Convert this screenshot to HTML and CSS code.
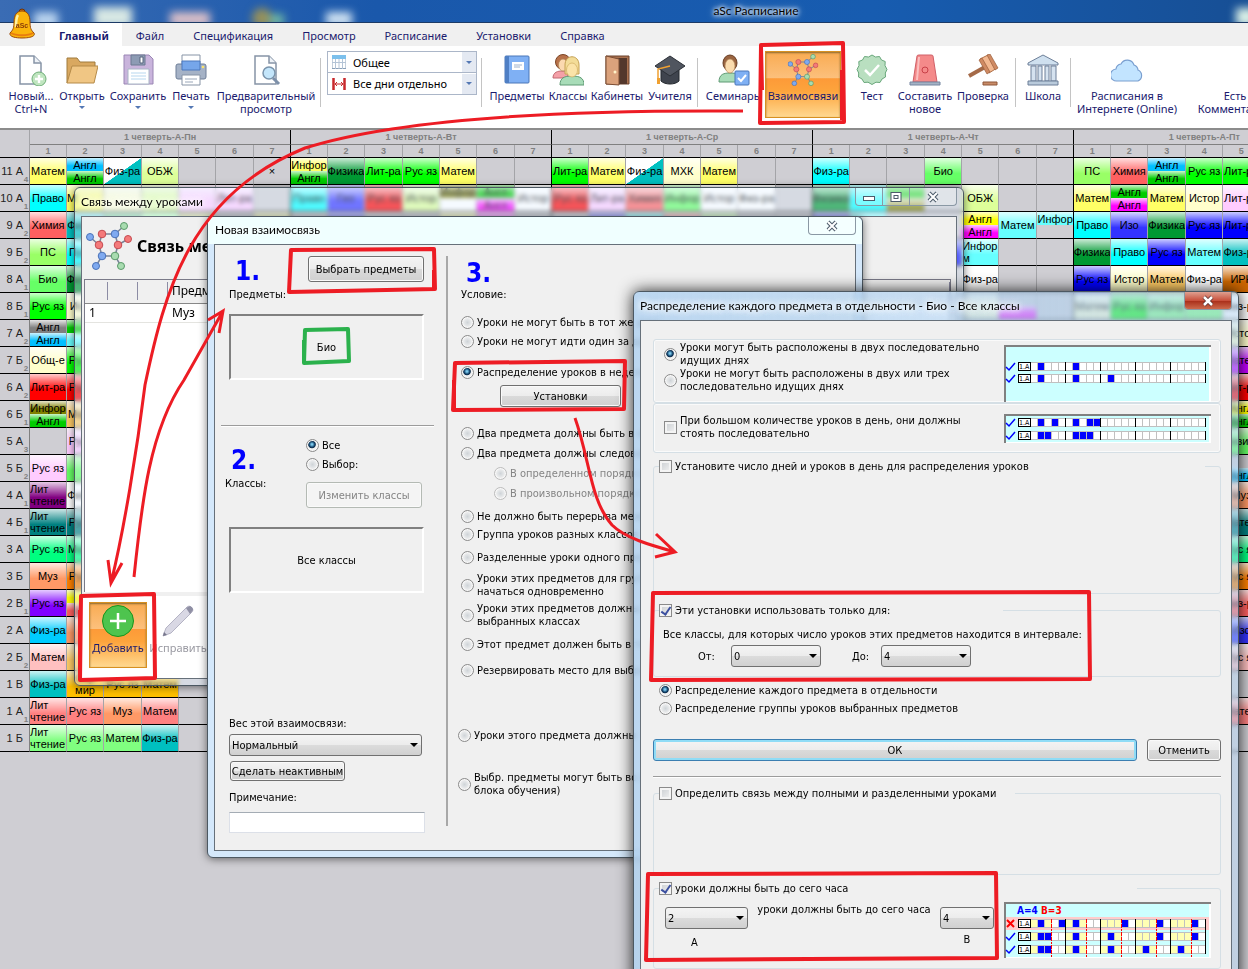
FILE: index.html
```
<!DOCTYPE html>
<html lang="ru">
<head>
<meta charset="utf-8">
<title>aSc Расписание</title>
<link rel="stylesheet" href="styles.css">
</head>
<body>
<svg class="defs" aria-hidden="true">
  <symbol id="net" viewBox="0 0 46 48">
    <g fill="none" stroke="#7a8498" stroke-width="1.5">
      <path d="M4 15 13 23 16 12 29 12 38 4M29 12 32 23 42 17M32 23 29 34 35 44M29 34 16 34 13 23M16 34 10 44"/>
    </g>
    <g stroke-width="1">
      <g fill="#7faaf0" stroke="#4a72b8"><circle cx="4" cy="15" r="3.5"/><circle cx="29" cy="12" r="3.8"/><circle cx="16" cy="34" r="3.8"/><circle cx="10" cy="44" r="3.5"/></g>
      <g fill="#f47a7a" stroke="#c44a50"><circle cx="16" cy="12" r="3.8"/><circle cx="13" cy="23" r="3.8"/><circle cx="32" cy="23" r="3.8"/><circle cx="42" cy="17" r="3.5"/></g>
      <g fill="#a8dcb0" stroke="#5a9a6a"><circle cx="38" cy="4" r="3.5"/><circle cx="29" cy="34" r="3.8"/><circle cx="35" cy="44" r="3.5"/></g>
    </g>
  </symbol>
  <symbol id="page" viewBox="0 0 32 32">
    <path d="M5 2h14l7 7v21H5z" fill="#fff" stroke="#8794a6" stroke-width="1.5"/>
    <path d="M19 2v7h7" fill="#eef2f7" stroke="#8794a6" stroke-width="1.5"/>
  </symbol>
</svg>

<header class="titlebar">
  <svg class="titlebar-glow" width="1248" height="22" aria-hidden="true">
    <g class="blobs">
      <rect x="34" y="12" width="24" height="16" fill="#b9d3ee"/>
      <rect x="94" y="7" width="38" height="20" fill="#d8e8e4"/>
      <rect x="170" y="12" width="40" height="14" fill="#dcc0c8"/>
      <circle cx="262" cy="18" r="10" fill="#97915a"/><rect x="270" y="14" width="14" height="12" fill="#6fb7a4"/>
      <rect x="326" y="12" width="26" height="14" fill="#cfe2f2"/>
      <rect x="1236" y="8" width="20" height="18" fill="#d8efe6"/>
    </g>
  </svg>
  <svg class="bell" width="28" height="32" viewBox="0 0 28 32" aria-hidden="true">
    <circle cx="13" cy="4" r="3" fill="#c96a10" stroke="#6e3206"/>
    <path d="M13 3C7 3 5 8 5 14c0 6-1 8-4 11-1 4 6 5 12 5s14-1 12-5c-3-3-4-5-4-11 0-6-2-11-8-11z" fill="#fbb40c" stroke="#9a4a08"/>
    <path d="M9 7c-2 3-2 8-2 12" fill="none" stroke="#fff0a0" stroke-width="2.5"/>
    <path d="M2 25c5 3 17 3 22 0" fill="none" stroke="#e87c10" stroke-width="2"/>
    <text x="13" y="20" text-anchor="middle" class="bell-text">aSc</text>
  </svg>
  <span class="app-title">aSc Расписание</span>
</header>

<nav class="tabs">
  <a class="tab active" href="#main">Главный</a>
  <a class="tab" href="#file">Файл</a>
  <a class="tab" href="#spec">Спецификация</a>
  <a class="tab" href="#view">Просмотр</a>
  <a class="tab" href="#schedule">Расписание</a>
  <a class="tab" href="#settings">Установки</a>
  <a class="tab" href="#help">Справка</a>
</nav>

<div class="ribbon">
  <button class="tool w50"><svg viewBox="0 0 32 32"><use href="#page"/><circle cx="24" cy="25" r="7" fill="#bfe5bf" stroke="#6fae78"/><path d="M24 21v8M20 25h8" stroke="#fff" stroke-width="2.4"/></svg>Новый...<br>Ctrl+N</button>
  <button class="tool w52"><svg viewBox="0 0 32 32"><path d="M1 29V4h10l3 4h15v6" fill="#d9a860" stroke="#a07a3c"/><path d="M1 29 6 12h26l-4 17z" fill="#f0c684" stroke="#b58a48"/></svg>Открыть<i class="caret"></i></button>
  <button class="tool w60"><svg viewBox="0 0 32 32"><path d="M2 1h25l4 4v25H2z" fill="#c9b4dc" stroke="#9a86b4"/><path d="M9 1h14v10H9z" fill="#8d9bb4" stroke="#6c7a92"/><path d="M18 3h3v6h-3z" fill="#fff" stroke="#56657d"/><path d="M6 15h21v15H6z" fill="#fff" stroke="#a9b6c6"/><path d="M9 19h15M9 22h15M9 25h15" stroke="#b7d7ef"/></svg>Сохранить<i class="caret"></i></button>
  <button class="tool w46"><svg viewBox="0 0 32 32"><path d="M7 1h18v9H7z" fill="#fff" stroke="#8794a6"/><rect x="1" y="10" width="30" height="15" rx="2" fill="#a5b2c6" stroke="#6e7f98"/><path d="M7 7h18v9H7z" fill="#76a6ea" stroke="#4d79bd"/><path d="M7 21h18v10H7z" fill="#fff" stroke="#8794a6"/><path d="M10 25h12M10 28h8" stroke="#9aa7b9"/><circle cx="28" cy="13" r="1.3" fill="#fbe36a"/></svg>Печать<i class="caret"></i></button>
  <button class="tool w104"><svg viewBox="0 0 32 32"><use href="#page"/><path d="m23 24 6 6" stroke="#7d90aa" stroke-width="3"/><circle cx="19" cy="19" r="6" fill="#c4e6fb" stroke="#7a94ac" stroke-width="1.5"/></svg>Предварительный<br>просмотр</button>
  <span class="sep"></span>
  <div class="views">
    <label class="view"><svg width="14" height="14" viewBox="0 0 14 14"><path d="M0 .5h14v13H0z" fill="#fff" stroke="#8aa0b8"/><path d="M0 0h14v4H0z" fill="#7cc0ec"/><path d="M3.5 4v10M7 4v10M10.5 4v10M0 7.500h14" stroke="#b4c4d6"/></svg><select aria-label="Вид"><option>Общее</option></select></label>
    <label class="view"><svg width="14" height="14" viewBox="0 0 14 14"><path d="M1.500 1v12M12.500 1v12" stroke="#c8282c" stroke-width="2.500"/><path d="M3 7h8M5 5 3 7l2 2M9 5l2 2-2 2" fill="none" stroke="#c8282c"/></svg><select aria-label="Дни"><option>Все дни отдельно</option></select></label>
  </div>
  <span class="sep near"></span>
  <button class="tool w60"><svg viewBox="0 0 32 32"><rect x="4" y="2" width="24" height="27" rx="1" fill="#7fb0f4" stroke="#4b76b8"/><path d="M4 2h4v27H4z" fill="#4f7fc4"/><path d="M11 8h12v8H11z" fill="#fff"/><path d="M13 11h8M13 13h6" stroke="#9fb2cc"/></svg>Предметы</button>
  <button class="tool w42"><svg viewBox="0 0 32 32"><path d="M1 24c0-6 5-7 9-7s6 2 6 7z" fill="#f4a0a8" stroke="#c26a72"/><circle cx="11" cy="8" r="7.500" fill="#b8724a" stroke="#7c4526"/><ellipse cx="11" cy="11" rx="4.500" ry="6" fill="#fbd9b0" stroke="#b08458" stroke-width=".7"/><path d="M8 31c0-7 4-9 12-9s12 2 12 9z" fill="#a8dcb8" stroke="#5f9a74"/><path d="M13 20V11c0-11 14-11 14 0v9z" fill="#f3dc98" stroke="#c4a052"/><ellipse cx="20" cy="16" rx="5.500" ry="7" fill="#fbe3a8" stroke="#d0ac62" stroke-width=".7"/></svg>Классы</button>
  <button class="tool w56"><svg viewBox="0 0 32 32"><path d="M5 2h23v28H5z" fill="#a9714f" stroke="#6d432c"/><path d="M8 4h18v26H8z" fill="#54382c"/><path d="M5 2l13 3v26l-13-1z" fill="#dba27c" stroke="#7d4e34"/><circle cx="14" cy="18" r="1.500" fill="#fff2c8"/></svg>Кабинеты</button>
  <button class="tool w50"><svg viewBox="0 0 32 32"><path d="M7 15v12c4 4 14 4 18 0V15z" fill="#3f444e" stroke="#24282e"/><path d="M16 2 31 12 16 22 1 12z" fill="#50555f" stroke="#2b2f36"/><path d="M16 12 4 15v12" fill="none" stroke="#f0a030" stroke-width="1.500"/><path d="M3 24h3v6H3z" fill="#f0a030"/></svg>Учителя</button>
  <span class="sep"></span>
  <button class="tool w60"><svg viewBox="0 0 32 32"><path d="M1 28c0-8 5-9 11-9s11 1 11 9z" fill="#a8dcb8" stroke="#5f9a74"/><ellipse cx="12" cy="9" rx="7" ry="8" fill="#9a6440" stroke="#6a4026"/><ellipse cx="12" cy="12" rx="5" ry="7" fill="#fbdcae" stroke="#b08458" stroke-width=".7"/><rect x="17" y="17" width="14" height="14" rx="1" fill="#7fb0f4" stroke="#4b76b8"/><path d="m20 24 3 3 5-6" fill="none" stroke="#fff" stroke-width="2"/></svg>Семинары</button>
  <button class="tool linked hot"><svg viewBox="0 0 46 48"><use href="#net"/></svg>Взаимосвязи</button>
  <button class="tool w50"><svg viewBox="0 0 32 32"><path d="m16 1 3.500 2 4-.5L25.500 6l3.700 1.500-.2 4L31 15.500 29.300 19l.2 4-3.500 2-2 3.500-4-.3L16 30.500l-4-2.300-4 .3L6 25l-3.500-2 .2-4L1 15.500 3 11.500l-.2-4L6.500 6l2-3.500 4 .5z" fill="#b9dfc0" stroke="#6aa87c"/><path d="m9 16 5 5 9-10" fill="none" stroke="#fff" stroke-width="2.500"/></svg>Тест</button>
  <button class="tool w56"><svg viewBox="0 0 32 32"><path d="M4 28 8 2q0-1 2-1h12q2 0 2 1l4 26z" fill="#f48a8a" stroke="#d06068"/><path d="M10 3 8 26" stroke="#fbc0c0" stroke-width="2"/><circle cx="16" cy="16" r="3" fill="none" stroke="#c84048"/><path d="M1 28h30v3H1z" fill="#a4b2c4" stroke="#7485a0"/></svg>Составить<br>новое</button>
  <button class="tool w60"><svg viewBox="0 0 32 32"><path d="M2 22 18 13" stroke="#a56a48" stroke-width="4"/><path d="m13 5 8-4 9 13-8 5z" fill="#f3b890" stroke="#b07048"/><path d="m12 6 3-2 8 14-3 2zM20 1l3-1 8 14-3 2z" fill="#d08a62" stroke="#9a5e3c" stroke-width=".7"/><path d="M16 28h14v3H16z" fill="#c98c68" stroke="#8e5638"/></svg>Проверка</button>
  <span class="sep tight"></span>
  <button class="tool w50"><svg viewBox="0 0 32 32"><path d="M1 9 16 1l15 8v2H1z" fill="#cfe0ef" stroke="#6d7f98"/><path d="M4 12h5v15H4zM11 12h4v15h-4zM18 12h4v15h-4zM24 12h5v15h-5z" fill="#d5e2ef" stroke="#6d7f98"/><path d="M1 27h30v4H1z" fill="#b9cadb" stroke="#6d7f98"/></svg>Школа</button>
  <span class="sep tight"></span>
  <button class="tool w108"><svg viewBox="0 0 32 32"><path d="M6 27a6 6 0 0 1-1-12 6 6 0 0 1 5-5 7 7 0 0 1 13 1 6 6 0 0 1 4 5 6 6 0 0 1 0 11z" fill="#c2e4ff" stroke="#7a9fd0" stroke-width="1.200"/></svg>Расписания в<br>Интернете (Online)</button>
  <button class="tool w108"><svg viewBox="0 0 32 32"></svg>Есть<br>Комментарии</button>
</div>

<main class="desk">
  <table class="grid" id="grid"></table>
</main>

<section class="window links" aria-label="Связь между уроками">
  <div class="caption"><span>Связь между уроками</span>
    <div class="caption-buttons">
      <button aria-label="Свернуть"><svg width="14" height="12" viewBox="0 0 14 12"><rect x="1.500" y="5.500" width="11" height="4" fill="#fff" stroke="#4c5a6a"/></svg></button>
      <button aria-label="Развернуть"><svg width="14" height="12" viewBox="0 0 14 12"><rect x="2" y="1.500" width="10" height="9" fill="#fff" stroke="#4c5a6a"/><rect x="5" y="4.500" width="4" height="3" fill="none" stroke="#4c5a6a"/></svg></button>
      <button class="wide" aria-label="Закрыть"><svg width="14" height="12" viewBox="0 0 14 12"><path d="m3 2 8 8M11 2l-8 8" stroke="#4c5a6a" stroke-width="4"/><path d="m3 2 8 8M11 2l-8 8" stroke="#fff" stroke-width="2"/></svg></button>
    </div>
  </div>
  <div class="client links-client">
    <div class="links-head"><svg width="46" height="48"><use href="#net"/></svg><h2>Связь между уроками</h2></div>
    <div class="links-list">
      <table class="list"><thead><tr><th class="c1"></th><th class="c2"></th><th class="c2"></th><th>Предмет</th></tr></thead>
      <tbody><tr><td>1</td><td></td><td></td><td>Муз</td></tr></tbody></table>
    </div>
    <div class="links-tools">
      <button class="tool hot add"><svg viewBox="0 0 32 32"><circle cx="16" cy="16" r="15.500" fill="#4ec44e" stroke="#18941c"/><path d="M16 8v16M8 16h16" stroke="#fff" stroke-width="2.500"/></svg>Добавить</button>
      <button class="tool edit" disabled><svg viewBox="0 0 32 32"><path d="M1 31 4 23 25 2q2-2 4 0l1 1q2 2 0 4L9 28z" fill="#d9d8e4" stroke="#b4b3c4"/><path d="m24 3 4-2q3 1 3 4l-3 4z" fill="#8f8fa4"/><path d="m1 31 1-4 3 3z" fill="#77778c"/></svg>Исправить</button>
    </div>
  </div>
</section>

<section class="window rule" aria-label="Новая взаимосвязь">
  <div class="caption"><span>Новая взаимосвязь</span>
    <div class="caption-buttons"><button class="wide" aria-label="Закрыть"><svg width="14" height="12" viewBox="0 0 14 12"><path d="m3 2 8 8M11 2l-8 8" stroke="#4c5a6a" stroke-width="4"/><path d="m3 2 8 8M11 2l-8 8" stroke="#fff" stroke-width="2"/></svg></button></div>
  </div>
  <div class="client rule-client">
    <div class="rule-left">
      <div class="pick"><b class="step">1.</b><button class="btn tall">Выбрать предметы</button></div>
      <div class="caption-text">Предметы:</div>
      <div class="sunken">Био</div>
      <hr>
      <div class="pick classes">
        <div><b class="step">2.</b><div class="classes-label">Классы:</div></div>
        <div class="choice">
          <label><input type="radio" name="cls" checked>Все</label>
          <label><input type="radio" name="cls">Выбор:</label>
          <button class="btn tall" disabled>Изменить классы</button>
        </div>
      </div>
      <div class="sunken second">Все классы</div>
      <div class="weight">
        <label for="weight">Вес этой взаимосвязи:</label>
        <span class="combo"><select id="weight"><option>Нормальный</option></select></span>
        <button class="btn inactive">Сделать неактивным</button>
        <label for="note">Примечание:</label>
        <input type="text" id="note">
      </div>
    </div>
    <div class="rule-right">
      <b class="step">3.</b>
      <div class="caption-text">Условие:</div>
      <div class="conds">
        <label><input type="radio" name="cond">Уроки не могут быть в тот же день</label>
        <label class="g3"><input type="radio" name="cond">Уроки не могут идти один за другим</label>
        <label class="g15"><input type="radio" name="cond" checked>Распределение уроков в неделе</label>
        <button class="btn setup">Установки</button>
        <label class="g18"><input type="radio" name="cond">Два предмета должны быть в один</label>
        <label class="g4"><input type="radio" name="cond">Два предмета должны следовать</label>
        <label class="g4 sub"><input type="radio" name="ord" disabled>В определенном порядке</label>
        <label class="g4 sub"><input type="radio" name="ord" disabled>В произвольном порядке</label>
        <label class="g7"><input type="radio" name="cond">Не должно быть перерыва между</label>
        <label class="g2"><input type="radio" name="cond">Группа уроков разных классов</label>
        <label class="g7"><input type="radio" name="cond">Разделенные уроки одного предмета</label>
        <label class="g7"><input type="radio" name="cond"><span>Уроки этих предметов для групп<br>начаться одновременно</span></label>
        <label class="g4"><input type="radio" name="cond"><span>Уроки этих предметов должны<br>выбранных классах</span></label>
        <label class="g8"><input type="radio" name="cond">Этот предмет должен быть в том</label>
        <label class="g10"><input type="radio" name="cond">Резервировать место для выбранных</label>
        <label class="g49 out"><input type="radio" name="cond">Уроки этого предмета должны</label>
        <label class="g28 out"><input type="radio" name="cond"><span>Выбр. предметы могут быть во время<br>блока обучения)</span></label>
      </div>
    </div>
  </div>
</section>

<section class="window spread" aria-label="Распределение каждого предмета в отдельности">
  <div class="caption"><span>Распределение каждого предмета в отдельности - Био - Все классы</span>
    <div class="caption-buttons"><button class="wide red" aria-label="Закрыть"><svg width="14" height="12" viewBox="0 0 14 12"><path d="m3 2 8 8M11 2l-8 8" stroke="#5a3030" stroke-width="4"/><path d="m3 2 8 8M11 2l-8 8" stroke="#fff" stroke-width="2.500"/></svg></button></div>
  </div>
  <div class="client spread-client">
    <div class="box b1">
      <div class="opts">
        <label><input type="radio" name="days" checked><span>Уроки могут быть расположены в двух последовательно идущих днях</span></label>
        <label><input type="radio" name="days"><span>Уроки не могут быть расположены в двух или трех последовательно идущих днях</span></label>
      </div>
      <svg class="strip" id="strip1" width="207" height="57"></svg>
    </div>
    <div class="box b2">
      <label><input type="checkbox"><span>При большом количестве уроков в день, они должны стоять последовательно</span></label>
      <svg class="strip" id="strip2" width="207" height="29"></svg>
    </div>
    <fieldset class="b3"><legend class="l1"><label><input type="checkbox">Установите число дней и уроков в день для распределения уроков</label></legend></fieldset>
    <fieldset class="b4"><legend class="l2"><label><input type="checkbox" checked>Эти установки использовать только для:</label></legend>
      <p>Все классы, для которых число уроков этих предметов находится в интервале:</p>
      <div class="range"><label for="from">От:</label><span class="combo"><select id="from"><option>0</option></select></span><label for="to">До:</label><span class="combo"><select id="to"><option>4</option></select></span></div>
    </fieldset>
    <div class="modes">
      <label><input type="radio" name="mode" checked>Распределение каждого предмета в отдельности</label>
      <label><input type="radio" name="mode">Распределение группы уроков выбранных предметов</label>
    </div>
    <div class="actions"><button class="btn ok">ОК</button><button class="btn cancel">Отменить</button></div>
    <hr>
    <fieldset class="b5"><legend class="l3"><label><input type="checkbox">Определить связь между полными и разделенными уроками</label></legend></fieldset>
    <fieldset class="b6"><legend class="l4"><label><input type="checkbox" checked>уроки должны быть до сего часа</label></legend>
      <div class="hours">
        <label class="stack a"><span class="combo"><select><option>2</option></select></span><span class="letter">A</span></label>
        <span class="mid">уроки должны быть до сего часа</span>
        <label class="stack b"><span class="combo"><select><option>4</option></select></span>B</label>
        <svg class="strip" id="strip3" width="207" height="56"></svg>
      </div>
    </fieldset>
  </div>
</section>

<svg class="marks" width="1248" height="969" aria-hidden="true">
  <g fill="none" stroke="#ed1c24" stroke-width="3">
    <path d="M743 111C600 110 410 115 305 148C190 195 165 290 145 385C137 450 124 530 111 583M108 560l3 23 11-20"/>
    <path d="M134 577C142 500 150 430 184 380L223 311M208 320l15-9-4 22"/>
    <path d="M575 418C590 460 590 500 612 525C625 538 650 545 675 552M656 534l19 18-20 5"/>
  </g>
  <g fill="none" stroke="#ed1c24" stroke-width="4" stroke-linejoin="round">
    <path d="M761 45 843 43 844 122 760 123zM761 47 762 90M842 70v50"/>
    <path d="M291 250 434 249 435 289 289 292zM434 270v20"/>
    <path d="M455 363 625 361 624 409 453 410zM454 380v28"/>
    <path d="M653 593 1089 592 1090 679 651 680z"/>
    <path d="M648 874 996 873 997 958 646 960z"/>
    <path d="M81 596 154 594 155 678 80 680zM80 610v68"/>
    <path d="M305 330 348 329 349 361 304 363zM304 340v22" stroke="#2bb14c"/>
  </g>
</svg>
<script src="schedule.js"></script>
</body>
</html>
```

FILE: styles.css
```
* { box-sizing: border-box; }
body { margin: 0; min-height: 100vh; position: relative; overflow: hidden; background: #cfced3; color: #000; font: 11px/13px "DejaVu Sans Condensed", "DejaVu Sans", sans-serif; }
button, select, input { font: inherit; color: inherit; margin: 0; }
button { padding: 0; }
.defs { position: absolute; width: 0; height: 0; }

.titlebar { position: relative; height: 23px; background: linear-gradient(90deg, #3a6cb4, #1a58ab 30%, #175cb0 70%, #174f95); border-bottom: 1px solid #1c3a66; display: flex; justify-content: center; align-items: center; padding-left: 264px; }
.titlebar-glow { position: absolute; left: 0; top: 0; }
.blobs { filter: blur(4px); }
.bell { position: absolute; left: 9px; top: 8px; z-index: 2; }
.bell-text { font: bold 7px "Liberation Sans", sans-serif; fill: #8a3c08; }
.app-title { position: relative; font: 12px/16px Lato, sans-serif; text-shadow: 0 0 4px #fff, 0 0 5px #fff, 0 0 8px #cfe2ff; }

.tabs { display: flex; height: 23px; padding-left: 45px; background: #f0f0f0; font: 11px/26px "Noto Sans", sans-serif; }
.tab { padding: 0 15px 0 14px; color: #1a1a6e; text-decoration: none; }
.tab.active { padding: 0 13px 0 14px; background: #fff; font-weight: bold; }

.ribbon { display: flex; align-items: flex-start; height: 84px; overflow: hidden; padding: 5px 0 0 6px; background: #fff; border-bottom: 2px solid #8c8c8c; font: 11px/13px "Noto Sans", sans-serif; }
.tool { flex: none; display: flex; flex-direction: column; align-items: center; white-space: nowrap; height: 67px; border: 1px solid transparent; padding-top: 2px; background: none; color: #1a1a6e; line-height: 13px; }
.tool svg { flex: none; width: 32px; height: 32px; margin-bottom: 3px; }
.w42 { width: 42px; } .w46 { width: 46px; } .w50 { width: 50px; } .w52 { width: 52px; } .w56 { width: 56px; } .w60 { width: 60px; } .w104 { width: 104px; } .w108 { width: 108px; }
.linked { width: 76px; margin: 0 6px 0 1px; }
.tool.hot { border: 1px solid #d89020; background: linear-gradient(#f9ab52, #fcc07c 40%, #fd9a38 41%, #fda43c 60%, #ffd890); box-shadow: inset 0 1px 2px #8a6a30; }
.caret { width: 0; height: 0; margin-top: 4px; border: 3px solid transparent; border-top-color: #5478b4; }
.sep { flex: none; width: 1px; height: 49px; margin: 7px 6px 0 2px; background: #c4c4c4; }
.sep.near { margin: 7px 5px 0 4px; }
.sep.tight { margin: 7px 2px 0; }
.views { flex: none; width: 150px; }
.view { display: flex; align-items: center; height: 22px; padding-left: 4px; border: 1px solid #abb6c8; background: #fff; position: relative; color: #000; }
.view + .view { border-top: 0; }
.view select { flex: 1; min-width: 0; appearance: none; border: 0; background: none; padding-left: 4px; height: 20px; }
.view::after { content: ""; width: 14px; height: 20px; background: #e4e9f2; }
.view::before { content: ""; position: absolute; right: 4px; top: 9px; border: 3px solid transparent; border-top-color: #5478b4; }

.desk { overflow: hidden; }
.grid { border-collapse: separate; border-spacing: 0; table-layout: fixed; width: 1335px; font: 11px/13px "Liberation Sans", Arial, sans-serif; }
.grid th, .grid td { padding: 0; border-right: 1px solid #a4a4a8; border-bottom: 1px solid #000; text-align: center; overflow: hidden; white-space: nowrap; }
.grid th.day { height: 15px; border-bottom-color: #808080; }
.grid th.hour { height: 13px; }
.grid thead th { color: #808080; font-size: 9px; line-height: 11px; }
.grid th.last, .grid td.last, .grid th.day { border-right-color: #000; }
.grid tbody th { height: 27px; font-size: 11px; font-weight: normal; color: #222; border-right-color: #808080; }
.grid td { height: 27px; }
.row-label { display: flex; justify-content: flex-end; align-items: center; height: 26px; }
.row-label small { align-self: flex-end; width: 6px; font-size: 8px; line-height: 9px; font-weight: bold; color: #808080; }
.cell { display: flex; flex-direction: column; height: 26px; }
.part { flex: 1; display: flex; align-items: center; justify-content: center; line-height: 12px; background-image: linear-gradient(rgba(255,255,255,.8), rgba(255,255,255,0) 60%); }
.part.flat { background-image: none; }
.part.diag { background-image: linear-gradient(to bottom right, #fff 50%, #00c0c0 51%); }
.part.wrap { white-space: normal; text-align: left; justify-content: flex-start; }

.window { position: absolute; display: flex; flex-direction: column; border: 1px solid #4c5862; border-radius: 6px; padding: 0 6px 6px; box-shadow: 0 1px 8px rgba(0,0,0,.55); backdrop-filter: blur(2px); background: rgba(225,240,255,.35); }
.caption { flex: none; display: flex; justify-content: space-between; height: 28px; font: 12px/28px Lato, sans-serif; text-shadow: 0 0 6px #fff, 0 0 6px #fff, 0 0 8px #fff; white-space: nowrap; }
.caption-buttons { display: flex; height: 18px; border: 1px solid #8a98a4; border-top: 0; border-radius: 0 0 4px 4px; background: rgba(255,255,255,.25); overflow: hidden; }
.caption-buttons button { width: 27px; border: 0; border-right: 1px solid #8a98a4; background: none; display: flex; align-items: center; justify-content: center; }
.caption-buttons button:last-child { border-right: 0; }
.caption-buttons .wide { width: 46px; }
.caption-buttons .red { background: linear-gradient(#dfa090, #c8503c 50%, #a82c18 51%, #cc6a4c); }
.client { flex: 1; min-height: 0; background: #f0f0f0; border: 1px solid #66707a; overflow: hidden; }

.links { left: 74px; top: 187px; width: 890px; height: 499px; }
.links-client { display: flex; flex-direction: column; }
.links-head { flex: none; display: flex; align-items: center; height: 62px; padding: 0 0 4px 4px; gap: 5px; }
.links-head h2 { margin: 0; font: bold 16px/20px "Noto Sans", sans-serif; }
.links-list { flex: 1; margin: 0 5px 0 2px; background: #fff; border: 1px solid #7a7a88; border-bottom: 0; }
.list { width: 100%; border-collapse: collapse; table-layout: fixed; font: 12px/18px "Noto Sans", sans-serif; }
.list th { height: 23px; padding: 0 0 0 4px; font-weight: normal; text-align: left; background: linear-gradient(90deg, #8c8ca4, #8c8ca4) right center / 1px 18px no-repeat #f0f0f0; border-bottom: 1px solid #888; }
.list td { height: 19px; padding: 0 0 0 4px; border-bottom: 1px solid #e4e4e0; }
.c1 { width: 23px; } .c2 { width: 30px; }
.links-tools { flex: none; display: flex; gap: 2px; height: 86px; padding: 6px 0 0 7px; background: #fff; border-top: 4px solid #f0f0f0; font: 11px/13px "Noto Sans", sans-serif; }
.add { width: 58px; height: 66px; }
.edit { width: 58px; color: #9a9aa2; }
.add svg, .edit svg { margin-bottom: 4px; }

.rule { left: 207px; top: 216px; width: 656px; height: 642px; background: #d4e8fb; }
.rule .caption { height: 27px; line-height: 26px; background: #f0ffff; margin: 0 -6px; padding: 0 6px 0 7px; border-radius: 6px 6px 0 0; }
.rule-client { display: flex; }
.rule-left { flex: none; width: 233px; margin: 11px 0 24px; padding-left: 14px; border-right: 2px solid #a8a8a8; }
.pick { display: flex; justify-content: space-between; height: 32px; padding: 0 22px 0 6px; }
.step { display: block; width: 44px; font: bold 26px/30px "DejaVu Sans Condensed", sans-serif; color: #00f; }
.btn { border: 1px solid #707070; border-radius: 3px; background: linear-gradient(#f4f4f4, #ececec 49%, #dadada 50%, #d0d0d0); box-shadow: inset 0 0 0 1px #fafafa; white-space: nowrap; }
.btn.tall { width: 116px; height: 26px; }
.btn:disabled { color: #848484; border-color: #b4bab4; background: #f4f4f4; }
.caption-text { height: 13px; }
.sunken { display: flex; align-items: center; justify-content: center; width: 195px; height: 66px; margin-top: 13px; border: 2px solid; border-color: #808080 #fff #fff #808080; }
.rule-left hr { margin: 45px 12px 0 -8px; }
hr { border: 0; border-top: 1px solid #9c9c9c; border-bottom: 1px solid #fff; }
.pick.classes { height: 74px; margin-top: 12px; padding: 0 24px 0 2px; }
.pick.classes > div:first-child { padding-top: 6px; }
.classes-label { margin: 2px 0 0 -6px; }
.choice { display: flex; flex-direction: column; gap: 6px; width: 116px; }
.choice .btn { margin-top: 5px; }
.sunken.second { margin-top: 14px; }
.weight { display: flex; flex-direction: column; align-items: flex-start; padding: 124px 20px 0 0; }
.weight .combo { width: 193px; margin: 4px 0 5px; }
.weight .inactive { width: 115px; height: 20px; margin: 0 0 10px 1px; }
.weight input { width: 196px; height: 21px; margin-top: 8px; border: 1px solid #dce0e8; border-top-color: #a4acb4; background: #fff; }
label { display: flex; align-items: center; gap: 3px; }
.rule-right { flex: 1; min-width: 0; padding: 13px 0 0 13px; white-space: nowrap; }
.rule-right .step { padding-left: 5px; }
.conds { padding-top: 13px; }
.conds label { min-height: 16px; }
.g2 { margin-top: 2px; } .g3 { margin-top: 3px; } .g4 { margin-top: 4px; } .g7 { margin-top: 7px; } .g8 { margin-top: 8px; } .g10 { margin-top: 10px; } .g15 { margin-top: 15px; } .g18 { margin-top: 18px; } .g28 { margin-top: 28px; } .g49 { margin-top: 49px; }
.conds .sub { padding-left: 33px; color: #848484; }
.conds .out { margin-left: -3px; }
.setup { display: block; width: 121px; height: 22px; margin: 5px 0 0 39px; }

input[type=radio], input[type=checkbox] { flex: none; appearance: none; width: 13px; height: 13px; border: 1px solid #8a8a8a; background: radial-gradient(#cfd4d8, #f4f4f4 70%); box-shadow: inset 0 0 0 1px #f8f8f8; }
input[type=radio] { border-radius: 50%; }
input[type=radio]:checked { background: radial-gradient(circle at 45% 40%, #7ac8ec 8%, #14466e 30%, #0c2c4c 38%, #f0f0f0 48%); }
input[type=radio]:disabled { border-color: #bcbcbc; }
input[type=checkbox] { box-shadow: inset 0 0 0 2px #f4f4f4; background: linear-gradient(135deg, #c8ccd0, #f4f4f4); display: flex; justify-content: center; }
input[type=checkbox]:checked::before { content: ""; width: 4px; height: 8px; border: solid #3c50a0; border-width: 0 2px 2px 0; rotate: 35deg; }
.combo { display: block; position: relative; height: 22px; }
.combo select { display: block; width: 100%; height: 22px; appearance: none; padding: 0 2px; border: 1px solid #707070; border-radius: 3px; background: linear-gradient(#f4f4f4, #ececec 49%, #dcdcdc 50%, #d0d0d0); }
.combo::after { content: ""; position: absolute; right: 4px; top: 9px; border: 4px solid transparent; border-top-color: #000; }

.spread { left: 633px; top: 291px; width: 606px; height: 720px; background: linear-gradient(90deg, rgba(178,210,240,.85), rgba(178,210,240,.5)); box-shadow: 0 0 16px rgba(0,0,0,.85); }
.spread-client { padding: 18px 10px 0 12px; }
.box { display: flex; justify-content: space-between; align-items: flex-start; border: 1px solid #d5dfe5; border-radius: 3px; box-shadow: inset 0 0 0 1px #fafafa; padding: 0 9px 0 10px; }
.box label { width: 334px; }
.opts label { width: 322px; }
.b1 { height: 64px; padding-top: 5px; } .b2 { height: 50px; padding-top: 10px; }
.b1 .opts { margin-top: -4px; }
.strip { flex: none; }
fieldset { margin: 0; padding: 0; border: 1px solid #d5dfe5; border-radius: 3px; min-width: 0; }
legend { margin-left: 5px; padding: 0; }
.l1 { width: 546px; } .l2 { width: 344px; } .l3 { width: 356px; } .l4 { width: 478px; }
.b3 { height: 134px; margin-top: 7px; } .b4 { height: 73px; margin-top: 10px; } .b5 { height: 88px; margin-top: 9px; } .b6 { height: 87px; margin-top: 7px; }
.b4 p { margin: 11px 0 4px 9px; }
.range { display: flex; align-items: center; padding-left: 44px; }
.range label { width: 33px; } .range .combo { width: 90px; } .range .combo + label { width: 29px; margin-left: 31px; }
.modes { padding: 7px 0 0 6px; }
.modes label + label { margin-top: 5px; }
.actions { display: flex; gap: 10px; padding-top: 24px; }
.ok { flex: 1; height: 22px; border-color: #3c7fb1; box-shadow: inset 0 0 0 2px #8fdcf6; }
.cancel { width: 74px; height: 22px; }
.spread hr { margin: 15px 0 0; }
.hours { display: flex; align-items: flex-start; padding: 7px 9px 0 11px; }
.stack { flex-direction: column; gap: 7px; margin-top: 5px; }
.stack .combo { width: 100%; }
.stack.a { width: 83px; align-items: flex-start; } .stack.b { width: 54px; gap: 4px; }
.letter { padding-left: 26px; }
.mid { flex: 1; text-align: center; padding-top: 1px; }
.hours .strip { margin-left: 10px; }
.strip-text { font: 7px "DejaVu Sans Condensed", sans-serif; }
.strip-head { font: bold 10px "DejaVu Sans Condensed", sans-serif; }

.marks { position: absolute; left: 0; top: 0; pointer-events: none; }
```

FILE: schedule.js
```
// Subject palette: name -> colour
const C = { y: '#ffff66', sky: '#00bfff', g: '#00cc00', lime: '#00ff00', lg: '#66ff66', ob: '#ddff99', dg: '#009933', cy: '#00ffff', red: '#ff6060', ps: '#99ff66', pale: '#ffffcc', pink: '#ffccff', mag: '#ff00ff', blue: '#0000ff', iz: '#3333ff', lc: '#66ffff', teal: '#00c0c0', or: '#ffcc66', w: '#ffffff', rr: '#ff0000', ir: '#cc6600', gray: '#808080', yy: '#ffff00', ol: '#808000', pur: '#800080', dt: '#008080', sp: '#00ff80', sal: '#ff9966', vio: '#8000ff', az: '#00ccff', mp: '#ffc0c0', gold: '#ffc000', coral: '#ff8080', mint: '#80ff80', org: '#ff8000', vi: '#c000ff' };
// Each row: label, shift mark, cells keyed by column; "/" splits a cell between groups
const rows = [
  ['11 А', 4, { 0: 'Матем|y', 1: 'Англ|sky/Англ|g', 2: 'Физ-ра|diag', 3: 'ОБЖ|ob', 6: '×', 7: 'Инфор|y/Англ|g', 8: 'Физика|dg', 9: 'Лит-ра|lime', 10: 'Рус яз|lime', 11: 'Матем|y', 14: 'Лит-ра|lime', 15: 'Матем|y', 16: 'Физ-ра|diag', 17: 'МХК|pale', 18: 'Матем|y', 21: 'Физ-ра|cy', 24: 'Био|lg', 28: 'ПС|ps', 29: 'Химия|red', 30: 'Англ|sky/Англ|g', 31: 'Рус яз|lime', 32: 'Лит-ра|lime' }],
  ['10 А', 1, { 0: 'Право|cy', 1: 'М|y|wrap', 2: '|pale', 3: '|ob', 4: '|pink', 5: 'Лит-ра|pink', 7: 'Право|cy', 8: 'Гео|iz', 9: 'Рус яз|rr', 10: 'Истор|ob', 11: 'Инфор|ol/|w', 12: 'Англ|g/Англ|mag', 13: 'Истор|w', 14: 'Рус яз|rr', 15: 'Лит-ра|pink', 16: 'Химия|red', 17: 'Инфор|lg', 18: 'Истор|w', 19: 'Физ-ра|w', 21: 'Физика|dg', 22: '|cy', 23: '|g/|ol', 25: 'ОБЖ|ob', 28: 'Матем|y', 29: 'Англ|g/Англ|mag', 30: 'Матем|y', 31: 'Истор|pale', 32: 'Лит-ра|pink' }],
  ['9 А', 2, { 0: 'Химия|red', 1: 'Физ-ра|teal', 2: '|dg', 3: '|lg', 4: '|ol', 6: '|y', 8: '|blue', 11: '|y', 12: '|mag', 15: '|blue', 16: '|cy', 17: '|red', 18: '|ps', 21: '|blue', 22: '|cy', 25: 'Англ|yy/Англ|mag', 26: 'Матем|lc', 27: 'Инфор|lc/ ', 28: 'Право|cy', 29: 'Изо|iz', 30: 'Физика|dg', 31: 'Рус яз|blue', 32: 'Лит-ра|blue' }],
  ['9 Б', 2, { 0: 'ПС|ps', 1: 'Право|cy', 24: '|blue', 25: 'Инфор м|lc|wrap', 28: 'Физика|dg', 29: 'Право|cy', 30: 'Рус яз|blue', 31: 'Матем|lc', 32: 'Физ-ра|teal' }],
  ['8 А', 1, { 0: 'Био|lg', 1: 'Физика|dg', 25: 'Физ-ра|w', 28: 'Рус яз|blue', 29: 'Истор|pale', 30: 'Матем|or', 31: 'Физ-ра|w', 32: 'ИРК|ir' }],
  ['8 Б', 1, { 0: 'Рус яз|lime', 1: 'Истор|pale', 25: '|pale', 26: ' /|mag', 28: 'Матем|pale', 29: 'Рус яз|lime', 30: 'Инфор|mint', 31: '|mint', 32: 'Физ-ра|w' }],
  ['7 А', 2, { 0: 'Англ|gray/Англ|sky', 1: '|g/|lc', 32: 'Истор|pale' }],
  ['7 Б', 2, { 0: 'Общ-е|pale', 1: 'Рус яз|lime', 32: 'Матем|vi' }],
  ['6 А', 2, { 0: 'Лит-ра|rr', 1: 'Рус яз|rr', 32: 'Лит-ра|rr' }],
  ['6 Б', 1, { 0: 'Инфор|ol/Англ|g', 1: 'Матем|or', 32: 'Англ|yy/Англ|g' }],
  ['5 А', 3, { 1: 'Рус яз|pink', 32: 'Физика|lg' }],
  ['5 Б', 2, { 0: 'Рус яз|pink', 1: '|lg', 32: ' /Англ|sky' }],
  ['4 А', 1, { 0: 'Лит чтение|pur|wrap', 1: 'Физ-ра|w', 32: 'Муз|sal' }],
  ['4 Б', 1, { 0: 'Лит чтение|dt|wrap', 1: 'Рус яз|dt', 32: 'Матем|dt' }],
  ['3 А', 0, { 0: 'Рус яз|sp', 1: 'Матем|sp', 32: 'Рус яз|sp' }],
  ['3 Б', 0, { 0: 'Муз|sal', 1: 'Рус яз|org', 32: 'Рус яз|org' }],
  ['2 В', 1, { 0: 'Рус яз|vio', 1: '|yy/Изо|red', 32: 'Физ-ра|red' }],
  ['2 А', 0, { 0: 'Физ-ра|az', 1: '|sal', 32: 'Изо|iz' }],
  ['2 Б', 2, { 0: 'Матем|mp', 1: '|or', 32: 'Рус яз|mp' }],
  ['1 В', 0, { 0: 'Физ-ра|teal', 1: 'Окр мир|gold|mid', 2: 'Рус яз|gold', 3: 'Матем|gold' }],
  ['1 А', 1, { 0: 'Лит чтение|coral|wrap', 1: 'Рус яз|coral', 2: 'Муз|sal', 3: 'Матем|coral', 32: 'Матем|coral' }],
  ['1 Б', 0, { 0: 'Лит чтение|mint|wrap', 1: 'Рус яз|mint', 2: 'Матем|mint', 3: 'Физ-ра|teal' }]
];
const days = ['Пн', 'Вт', 'Ср', 'Чт', 'Пт'];
const widths = [37, 37, 38, 37, 37, 38, 37];

function part(text) {
  const [name, color, mode] = text.split('|');
  if (color === 'diag') return `<div class="part diag">${name}</div>`;
  if (!color) return `<div class="part flat">${name}</div>`;
  const label = mode === 'mid' ? name.replace(' ', '<br>') : name;
  return `<div class="part ${mode === 'wrap' ? 'wrap' : ''}" style="background-color:${C[color]}"><span>${label}</span></div>`;
}
let html = '<colgroup><col style="width:30px">';
for (const d of days) html += widths.map(w => `<col style="width:${w}px">`).join('');
html += '</colgroup><thead><tr><th rowspan="2"></th>';
for (const d of days) html += `<th class="day" colspan="7">1 четверть-А-${d}</th>`;
html += '</tr><tr>';
for (let i = 0; i < 35; i++) html += `<th class="hour ${i % 7 === 6 ? 'last' : ''}">${i % 7 + 1}</th>`;
html += '</tr></thead><tbody>';
for (const [label, mark, cells] of rows) {
  html += `<tr><th><div class="row-label">${label}<small>${mark || ''}</small></div></th>`;
  for (let i = 0; i < 35; i++) {
    const inner = cells[i] ? `<div class="cell">${cells[i].split('/').map(part).join('')}</div>` : '';
    html += `<td class="${i % 7 === 6 ? 'last' : ''}">${inner}</td>`;
  }
  html += '</tr>';
}
document.getElementById('grid').innerHTML = html + '</tbody>';

// Preview strips: 25 lesson slots, five a day
function strip(id, lines, limit) {
  const svg = document.getElementById(id), w = 207, h = +svg.getAttribute('height');
  let s = `<rect width="${w}" height="${h}" fill="#fff"/><path d="M0 ${h}V0H${w}V2H2V${h}z" fill="#808080"/><rect x="2" y="2" width="${w - 4}" height="${h - 3}" fill="#ccffff"/>`;
  if (limit) s += '<text x="13" y="12" class="strip-head" fill="#0000ff">A=4</text><text x="37" y="12" class="strip-head" fill="#ff0000">B=3</text>';
  lines.forEach(([y, on, bad]) => {
    if (bad) s += `<rect x="2" y="${y - 2}" width="${w - 4}" height="13" fill="#ffcccc"/>`;
    s += bad ? `<path d="m3 ${y + 1} 7 7m0-7-7 7" stroke="#f00" stroke-width="2"/>` : `<path d="m2 ${y + 5} 3 3 6-7" fill="none" stroke="#00f" stroke-width="1.500"/>`;
    for (let i = 0; i < 25; i++) {
      const fill = on.includes(i) ? '#0000ff' : limit && i % 5 < 3 ? '#ffffb4' : '#fff';
      s += `<rect x="${26.5 + i * 7}" y="${y + .5}" width="7" height="8" fill="${fill}" stroke="#c0c0c0"/>`;
    }
    s += `<rect x="14.500" y="${y + .5}" width="12" height="8" fill="#fff" stroke="#000"/><text x="15" y="${y + 7}" class="strip-text">1.A</text>`;
    for (let d = 1; d <= 5; d++) s += `<path d="M${26.5 + d * 35} ${y}v${limit && y < 40 ? 13 : 9}" stroke="#000"/>`;
    if (limit) for (let d = 0; d < 5; d++) s += `<path d="M${47.5 + d * 35} ${y}v12" stroke="#f00" stroke-dasharray="4 1"/>`;
  });
  svg.innerHTML = s;
}
strip('strip1', [[17, [1, 6]], [29, [1, 6, 11]]]);
strip('strip2', [[4, [1, 3, 6, 8, 9]], [17, [1, 2, 6, 7, 8]]]);
strip('strip3', [[17, [1, 4, 6, 13, 18, 23], true], [30, [1, 2, 6, 11, 18, 23]], [43, [1, 2, 6, 11, 16, 21]]], true);
```
